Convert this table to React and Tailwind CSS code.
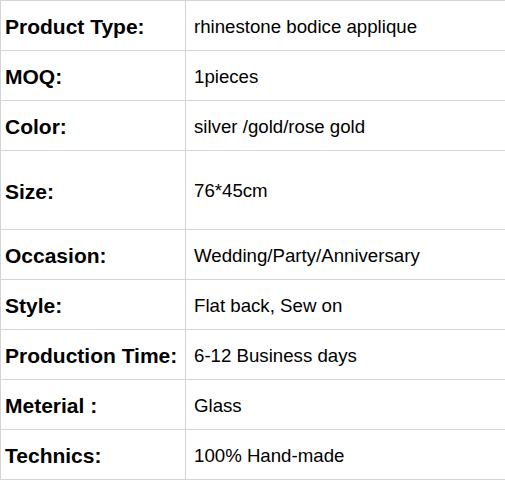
export default function App() {
  const rows = [
    ["Product Type:", "rhinestone bodice applique", "h-[50px]"],
    ["MOQ:", "1pieces", "h-[50px]"],
    ["Color:", "silver /gold/rose gold", "h-[50px]"],
    ["Size:", "76*45cm", "h-[79px]"],
    ["Occasion:", "Wedding/Party/Anniversary", "h-[50px]"],
    ["Style:", "Flat back, Sew on", "h-[50px]"],
    ["Production Time:", "6-12 Business days", "h-[50px]"],
    ["Meterial :", "Glass", "h-[50px]"],
    ["Technics:", "100% Hand-made", "h-[50px]"],
  ];
  return (
    <div className="w-[505px] h-[480px] bg-white" style={{ fontFamily: '"Liberation Sans", Arial, sans-serif' }}>
      <table className="w-[505px] table-fixed border-collapse text-black">
        <colgroup>
          <col className="w-[185px]" />
          <col className="w-[320px]" />
        </colgroup>
        <tbody>
          {rows.map(([k, v, h]) => (
            <tr key={k} className={h}>
              <td className="border border-[#d4d4d4] pl-[4px] pt-[2px] align-middle text-[21px] font-bold leading-none whitespace-nowrap">{k}</td>
              <td className="border border-[#d4d4d4] pl-[8px] pt-[3px] align-middle text-[18.67px] leading-none whitespace-nowrap">{v}</td>
            </tr>
          ))}
        </tbody>
      </table>
    </div>
  );
}
